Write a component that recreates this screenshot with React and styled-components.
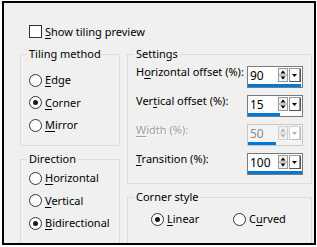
import React from "react";
import styled, { createGlobalStyle } from "styled-components";

const Global = createGlobalStyle`
  html, body {
    margin: 0;
    padding: 0;
    background: #fff;
  }
  body {
    font-family: "Noto Sans", "Liberation Sans", sans-serif;
    font-size: 11px;
    color: #000;
  }
`;

const Frame = styled.div`
  margin: 1px 0 0 2px;
  width: 314px;
  height: 244px;
  box-sizing: border-box;
  border: 2px solid #000;
  background: #f0f0f0;
  overflow: hidden;
  padding: 22px 0 0 16px;
`;

const CheckRow = styled.label`
  display: flex;
  align-items: center;
  gap: 3px;
  height: 13px;
  margin-left: 9px;
  line-height: 16px;
`;

const CheckBox = styled.span`
  width: 13px;
  height: 13px;
  box-sizing: border-box;
  border: 1px solid #333;
  background: #fff;
`;

const Columns = styled.div`
  display: grid;
  grid-template-columns: 100px 185px;
  column-gap: 7px;
  margin-top: 8px;
`;

const Column = styled.div`
  display: flex;
  flex-direction: column;
  gap: 5px;
`;

const Group = styled.fieldset`
  margin: 0;
  box-sizing: border-box;
  height: ${({ h }) => h}px;
  border: 1px solid #dcdcdc;
  padding: ${({ pt }) => pt}px 8px 0 8px;
  min-width: 0;
`;

const Legend = styled.legend`
  padding: 0 2px;
  margin-left: -2px;
  line-height: 16px;
`;

const RadioList = styled.div`
  display: flex;
  flex-direction: column;
  gap: 6.5px;
`;

const RadioRow = styled.label`
  display: flex;
  align-items: center;
  gap: 3px;
  height: 16px;
  line-height: 16px;
  white-space: nowrap;
`;

const Circle = styled.span`
  position: relative;
  width: 13px;
  height: 13px;
  box-sizing: border-box;
  border-radius: 50%;
  border: 1px solid #333;
  background: #fff;
  flex: none;
  &::after {
    content: "";
    display: ${({ checked }) => (checked ? "block" : "none")};
    position: absolute;
    left: 3px;
    top: 3px;
    width: 5px;
    height: 5px;
    border-radius: 50%;
    background: #1a1a1a;
  }
`;

const Key = styled.span`
  text-decoration: underline;
  text-underline-offset: 2px;
`;

const SettingsList = styled.div`
  display: flex;
  flex-direction: column;
  gap: 5px;
`;

const SettingRow = styled.div`
  display: flex;
  align-items: flex-start;
  height: 24px;
`;

const SettingLabel = styled.span`
  flex: 1;
  line-height: 16px;
  white-space: nowrap;
  color: ${({ disabled }) => (disabled ? "#a0a0a0" : "#000")};
  text-shadow: ${({ disabled }) => (disabled ? "1px 1px 0 #fff" : "none")};
`;

const SpinBox = styled.div`
  margin-top: 2px;
  width: 56px;
  height: 22px;
  box-sizing: border-box;
  border: 1px solid ${({ disabled }) => (disabled ? "#c8c8c8" : "#7a7a7a")};
  background: ${({ disabled }) => (disabled ? "#f4f4f4" : "#fff")};
  display: flex;
  flex-direction: column;
`;

const SpinTop = styled.div`
  flex: 1;
  display: flex;
  align-items: flex-start;
  padding: 1px 1px 0 2px;
`;

const SpinValue = styled.span`
  flex: 1;
  line-height: 16px;
  font-size: 12px;
  color: ${({ disabled }) => (disabled ? "#8a8a8a" : "#000")};
`;

const Bar = styled.div`
  height: 3px;
  background: #0078d7;
`;

const CornerRow = styled.div`
  display: grid;
  grid-template-columns: 82px auto;
  padding-left: 15px;
`;

function Spinner({ disabled }) {
  const ink = disabled ? "#b0b0b0" : "#000";
  const edge = disabled ? "#d0d0d0" : "#9a9a9a";
  return (
    <svg width="23" height="14" viewBox="0 0 23 14">
      <rect x="0.5" y="0.5" width="9" height="13" fill="#f2f2f2" stroke={edge} />
      <line x1="1" y1="7" x2="9" y2="7" stroke={edge} />
      <path d="M2.5 5.5 L5 2.5 L7.5 5.5 Z" fill={ink} />
      <path d="M2.5 8.5 L5 11.5 L7.5 8.5 Z" fill={ink} />
      <rect x="11.5" y="0.5" width="10" height="13" fill="#fff" stroke={edge} />
      <line x1="22.5" y1="0.5" x2="22.5" y2="14" stroke={disabled ? "#c0c0c0" : "#555"} />
      <line x1="11.5" y1="13.5" x2="22.5" y2="13.5" stroke={disabled ? "#c0c0c0" : "#555"} />
      <path d="M14 6 L19 6 L16.5 9 Z" fill={ink} />
    </svg>
  );
}

function Radio({ checked, label, accel }) {
  const i = label.indexOf(accel);
  return (
    <RadioRow>
      <Circle checked={checked} />
      <span>
        {label.slice(0, i)}
        <Key>{accel}</Key>
        {label.slice(i + 1)}
      </span>
    </RadioRow>
  );
}

function Setting({ label, accel, value, bar, disabled }) {
  const i = label.indexOf(accel);
  return (
    <SettingRow>
      <SettingLabel disabled={disabled}>
        {label.slice(0, i)}
        <Key>{accel}</Key>
        {label.slice(i + 1)}
      </SettingLabel>
      <SpinBox disabled={disabled}>
        <SpinTop>
          <SpinValue disabled={disabled}>{value}</SpinValue>
          <Spinner disabled={disabled} />
        </SpinTop>
        <Bar style={{ width: bar }} />
      </SpinBox>
    </SettingRow>
  );
}

export default function App() {
  return (
    <>
      <Global />
      <Frame>
        <CheckRow>
          <CheckBox />
          <span>
            <Key>S</Key>how tiling preview
          </span>
        </CheckRow>
        <Columns>
          <Column>
            <Group h={100} pt={10}>
              <Legend>Tiling method</Legend>
              <RadioList>
                <Radio label="Edge" accel="E" />
                <Radio label="Corner" accel="C" checked />
                <Radio label="Mirror" accel="M" />
              </RadioList>
            </Group>
            <Group h={120} pt={3}>
              <Legend>Direction</Legend>
              <RadioList>
                <Radio label="Horizontal" accel="H" />
                <Radio label="Vertical" accel="V" />
                <Radio label="Bidirectional" accel="B" checked />
              </RadioList>
            </Group>
          </Column>
          <Column>
            <Group h={138} pt={2}>
              <Legend>Settings</Legend>
              <SettingsList>
                <Setting label="Horizontal offset (%):" accel="o" value="90" bar={53} />
                <Setting label="Vertical offset (%):" accel="t" value="15" bar={32} />
                <Setting label="Width (%):" accel="W" value="50" bar={28} disabled />
                <Setting label="Transition (%):" accel="T" value="100" bar={54} />
              </SettingsList>
            </Group>
            <Group h={80} pt={6}>
              <Legend>Corner style</Legend>
              <CornerRow>
                <Radio label="Linear" accel="L" checked />
                <Radio label="Curved" accel="u" />
              </CornerRow>
            </Group>
          </Column>
        </Columns>
      </Frame>
    </>
  );
}
